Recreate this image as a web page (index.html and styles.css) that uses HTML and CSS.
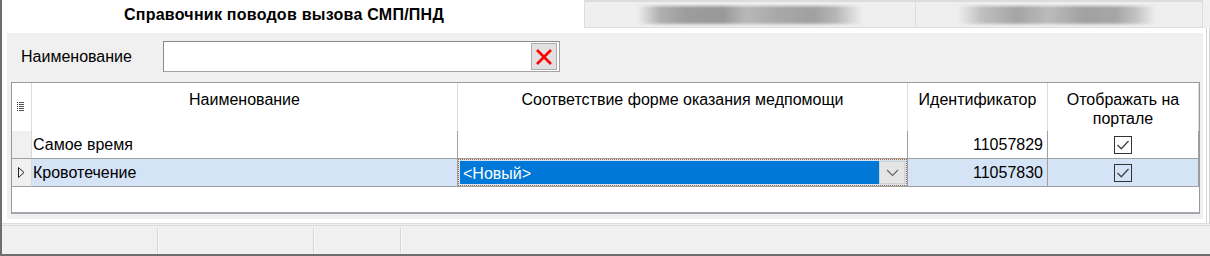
FILE: index.html
```html
<!DOCTYPE html>
<html>
    <head>
        <title>Справочник поводов вызова СМП/ПНД</title>
        <link rel="stylesheet" href="styles.css">
    </head>
    <body>
        <div class="window">
            <div class="tabs">
                <div class="tab-active">Справочник поводов вызова СМП/ПНД</div>
                <div class="tab-strip">
                    <div class="tab tab-first"><span class="smudge"></span></div>
                    <div class="tab tab-second"><span class="smudge smudge-short"></span></div>
                </div>
                <div class="tab-filler"></div>
            </div>

            <div class="page">
                <div class="panel">
                    <div class="filter">
                        <span class="filter-label">Наименование</span>
                        <div class="filter-input">
                            <span class="clear-btn">
                                <svg width="18" height="18" viewBox="0 0 18 18">
                                    <path d="M2 2 L16 16 M16 2 L2 16" stroke="#f00" stroke-width="2.6" fill="none"/>
                                </svg>
                            </span>
                        </div>
                    </div>

                    <div class="grid">
                        <table>
                            <tr>
                                <th class="ind ind-head">
                                    <svg width="7" height="10" viewBox="0 0 7 10">
                                        <rect x="0" y="0" width="1" height="1" fill="#333"/><rect x="2" y="0" width="5" height="1" fill="#555"/>
                                        <rect x="0" y="2" width="1" height="1" fill="#333"/><rect x="2" y="2" width="5" height="1" fill="#555"/>
                                        <rect x="0" y="4" width="1" height="1" fill="#333"/><rect x="2" y="4" width="5" height="1" fill="#555"/>
                                        <rect x="0" y="6" width="1" height="1" fill="#333"/><rect x="2" y="6" width="5" height="1" fill="#555"/>
                                        <rect x="0" y="8" width="1" height="1" fill="#333"/><rect x="2" y="8" width="5" height="1" fill="#555"/>
                                    </svg>
                                </th>
                                <th class="col-name">Наименование</th>
                                <th class="col-form">Соответствие форме оказания медпомощи</th>
                                <th class="col-id">Идентификатор</th>
                                <th class="col-show">Отображать на портале</th>
                            </tr>
                            <tr>
                                <td class="ind"></td>
                                <td>Самое время</td>
                                <td></td>
                                <td class="num">11057829</td>
                                <td class="check">
                                    <svg width="18" height="18" viewBox="0 0 18 18">
                                        <rect x="0.5" y="0.5" width="17" height="17" fill="none" stroke="#333"/>
                                        <path d="M3.5 9 L7.3 12.8 L14.5 5" fill="none" stroke="#444" stroke-width="1.3"/>
                                    </svg>
                                </td>
                            </tr>
                            <tr class="selected">
                                <td class="ind">
                                    <svg width="7" height="11" viewBox="0 0 7 11">
                                        <path d="M0.5 0.5 L6 5.5 L0.5 10.5 Z" fill="none" stroke="#222"/>
                                    </svg>
                                </td>
                                <td>Кровотечение</td>
                                <td class="combo-cell">
                                    <div class="combo">
                                        <span class="combo-value">&lt;Новый&gt;</span>
                                        <span class="combo-btn">
                                            <svg width="13" height="8" viewBox="0 0 13 8">
                                                <path d="M1 1 L6.5 6.5 L12 1" fill="none" stroke="#666" stroke-width="1.2"/>
                                            </svg>
                                        </span>
                                    </div>
                                </td>
                                <td class="num">11057830</td>
                                <td class="check">
                                    <svg width="18" height="18" viewBox="0 0 18 18">
                                        <rect x="0.5" y="0.5" width="17" height="17" fill="none" stroke="#333"/>
                                        <path d="M3.5 9 L7.3 12.8 L14.5 5" fill="none" stroke="#444" stroke-width="1.3"/>
                                    </svg>
                                </td>
                            </tr>
                        </table>
                    </div>
                </div>
            </div>

            <div class="status">
                <div class="status-cell status-1"></div>
                <div class="status-cell status-2"></div>
                <div class="status-cell status-3"></div>
                <div class="status-rest"></div>
            </div>
        </div>
    </body>
</html>
```

FILE: styles.css
```css
body {
    margin: 0;
    background-color: #f0f0f0;
    font-family: "Liberation Sans", Arial, sans-serif;
    font-size: 16px;
    color: #000;
}
.window {
    width: 1210px;
    height: 256px;
    box-sizing: border-box;
    display: flex;
    flex-direction: column;
    background-color: #fff;
    border-left: 2px solid #6e6e6e;
    border-bottom: 2px solid #6e6e6e;
}

/* tabs */
.tabs {
    display: flex;
    height: 28px;
    flex-shrink: 0;
}
.tab-active {
    width: 582px;
    box-sizing: border-box;
    padding-right: 18px;
    text-align: center;
    font-weight: bold;
    letter-spacing: 0.25px;
    line-height: 30px;
    white-space: nowrap;
}
.tab-strip {
    width: 619px;
    box-sizing: border-box;
    display: flex;
    background-color: #efefef;
    border: 1px solid #dcdcdc;
    border-top-width: 2px;
}
.tab {
    display: flex;
    justify-content: center;
    align-items: flex-start;
    padding-top: 4px;
}
.tab-first {
    width: 330px;
    border-right: 1px solid #dcdcdc;
}
.tab-second {
    flex: 1;
}
.smudge {
    display: block;
    width: 226px;
    height: 18px;
    background: linear-gradient(90deg, #efefef 0%, #b0b0b0 10%, #9c9c9c 22%, #989898 38%, #b8b8b8 48%, #a8a8a8 62%, #a0a0a0 78%, #b6b6b6 88%, #efefef 100%);
    filter: blur(1.5px);
}
.smudge-short {
    width: 199px;
    margin-right: 5px;
    background: linear-gradient(90deg, #efefef 0%, #c0c0c0 12%, #a4a4a4 30%, #bbbbbb 46%, #a0a0a0 64%, #a6a6a6 80%, #c2c2c2 90%, #efefef 100%);
}
.tab-filler {
    flex: 1;
    background-color: #f0f0f0;
}

/* page */
.page {
    height: 195px;
    box-sizing: border-box;
    display: flex;
    padding: 5px 3px 4px 5px;
    border-right: 4px double #d4d4d4;
}
.panel {
    flex: 1;
    display: flex;
    flex-direction: column;
    background-color: #f0f0f0;
    padding: 8px 3px 5px 4px;
}
.filter {
    display: flex;
    align-items: center;
    height: 31px;
    padding-left: 10px;
    margin-bottom: 10px;
}
.filter-label {
    width: 142px;
}
.filter-input {
    width: 397px;
    height: 31px;
    box-sizing: border-box;
    display: flex;
    justify-content: flex-end;
    align-items: center;
    padding-right: 2px;
    background-color: #fff;
    border: 1px solid #a3a3a3;
    border-top-color: #8a8a8a;
    border-left-color: #8a8a8a;
}
.clear-btn {
    width: 26px;
    height: 27px;
    box-sizing: border-box;
    display: flex;
    justify-content: center;
    align-items: center;
    background-color: #e1e1e1;
    border: 1px solid #adadad;
}

/* grid */
.grid {
    flex: 1;
    background-color: #fff;
    border: 1px solid #9a9a9a;
    border-bottom: 2px solid #a4a7ad;
    overflow: hidden;
}
.grid table {
    width: 100%;
    table-layout: fixed;
    border-collapse: separate;
    border-spacing: 0;
}
.grid th {
    height: 48px;
    box-sizing: border-box;
    padding: 7px 4px 0;
    vertical-align: top;
    font-weight: normal;
    line-height: 19px;
    text-align: center;
    border-right: 1px solid #dcdcdc;
}
.grid td {
    height: 28px;
    box-sizing: border-box;
    padding: 0 2px 0 1px;
    white-space: nowrap;
    border-right: 1px solid #a0a0a0;
    border-bottom: 1px solid #a0a0a0;
}
.grid th.ind {
    width: 20px;
    padding: 0;
    vertical-align: middle;
}
.ind-head svg {
    display: block;
    margin: 0 0 0 5px;
}
.col-name { width: 426px; }
.col-form { width: 450px; }
.col-id { width: 140px; }
.grid td.ind {
    padding: 0 0 0 6px;
    background-color: #f0f0f0;
    border-right-color: #d8d8d8;
}
.grid td.ind svg {
    display: block;
}
.grid td.num {
    text-align: right;
    padding-right: 4px;
}
.grid td.check {
    text-align: center;
    padding: 0;
}
.grid td.check svg {
    display: block;
    margin: 0 auto;
}
.selected td {
    background-color: #d5e3f7;
}
.grid .selected td.ind {
    background-color: #f0f0f0;
}
.grid td.combo-cell {
    padding: 0;
}
.combo {
    height: 27px;
    box-sizing: border-box;
    display: flex;
    padding: 1px;
    border: 1px dotted #b06a32;
}
.combo-value {
    flex: 1;
    background-color: #0078d7;
    color: #fff;
    line-height: 25px;
    padding-left: 3px;
}
.combo-btn {
    width: 26px;
    display: flex;
    justify-content: center;
    align-items: center;
    background-color: #e5e5e5;
    border: 1px solid #d0d0d0;
    box-sizing: border-box;
}

/* status bar */
.status {
    flex: 1;
    display: flex;
    background-color: #f0f0f0;
    border-top: 3px double #dcdcdc;
    padding: 2px 0 1px;
}
.status-cell {
    border-right: 1px solid #d6d6d6;
    box-shadow: 1px 0 0 #fafafa;
}
.status-1 { width: 155px; }
.status-2 { width: 155px; }
.status-3 { width: 86px; }
.status-rest { flex: 1; }
```
